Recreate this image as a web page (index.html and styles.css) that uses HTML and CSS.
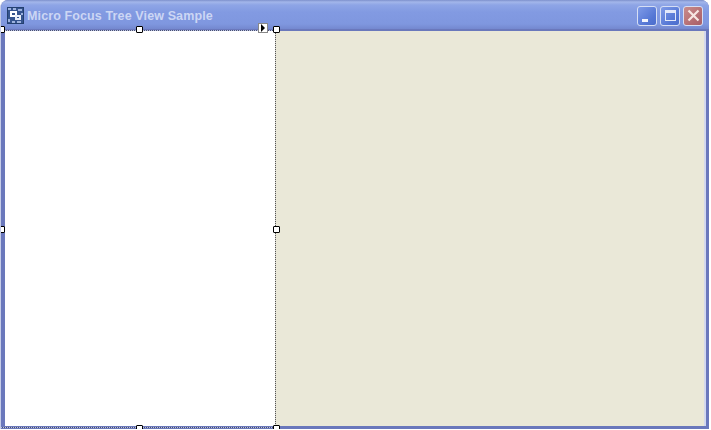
FILE: index.html
```html
<!DOCTYPE html>
<html lang="en">
<head>
  <meta charset="UTF-8">
  <title>Micro Focus Tree View Sample</title>
  <link rel="stylesheet" href="styles.css">
</head>
<body>
  <div class="window">
    <div class="titlebar">
      <svg class="app-icon" width="17" height="17" viewBox="0 0 17 17">
        <rect x="0.5" y="0.5" width="16" height="16" fill="#35548f" stroke="#24406f"/>
        <path d="M1 1h3v2H1zM6 1h3v2H6zM11 2h4v2h-4zM1 12h2v3H1zM5 14h3v2H5zM10 14h4v2h-4zM14 6h2v2h-2z" fill="#9db2de"/>
        <rect x="3" y="4" width="7" height="6" fill="#fff"/>
        <rect x="5" y="6" width="3" height="2" fill="#35548f"/>
        <rect x="8" y="8" width="6" height="5" fill="#e8eef8"/>
        <rect x="10" y="10" width="2" height="1" fill="#35548f"/>
      </svg>
      <span class="title">Micro Focus Tree View Sample</span>
      <div class="controls">
        <div class="ctl ctl-min"><span class="min-bar"></span></div>
        <div class="ctl ctl-max"><span class="max-box"></span></div>
        <div class="ctl ctl-close">
          <svg width="13" height="13" viewBox="0 0 13 13"><path d="M1.5 1.5l10 10M11.5 1.5l-10 10" stroke="#f6e6e2" stroke-width="2.2" fill="none"/></svg>
        </div>
      </div>
    </div>
    <div class="client">
      <div class="tree"></div>
      <div class="splitter"></div>
      <div class="panel"></div>

      <!-- selection handles of the designer -->
      <span class="grip grip-tl"></span>
      <span class="grip grip-tm"></span>
      <span class="grip grip-tr"></span>
      <span class="grip grip-ml"></span>
      <span class="grip grip-mr"></span>
      <span class="grip grip-bm"></span>
      <span class="grip grip-br"></span>
      <span class="smart-tag"></span>
    </div>
  </div>
</body>
</html>
```

FILE: styles.css
```css
html, body {
  margin: 0;
  padding: 0;
  background: #fff;
  overflow: hidden;
}
.window {
  width: 709px;
  height: 429px;
  box-sizing: border-box;
  display: flex;
  flex-direction: column;
  border-left: 1px solid #c5cce8;
  border-radius: 8px 8px 0 0;
  background: #6a78bc;
  overflow: hidden;
}
.titlebar {
  height: 29px;
  flex: none;
  display: flex;
  align-items: center;
  padding: 2px 6px 0 6px;
  box-sizing: border-box;
  background: linear-gradient(to bottom, #7d90cc 0, #a3b6ea 2px, #8ea5e6 5px, #829ae2 12px, #7f97df 24px, #7488cf 29px);
}
.app-icon {
  flex: none;
}
.title {
  margin-left: 3px;
  font: bold 12.5px "Liberation Sans", Arial, sans-serif;
  letter-spacing: 0.12px;
  color: #ccd6f4;
}
.controls {
  margin-left: auto;
  display: flex;
  gap: 3px;
}
.ctl {
  width: 20px;
  height: 20px;
  box-sizing: border-box;
  border: 1px solid #d6def4;
  border-radius: 3px;
  display: flex;
  align-items: center;
  justify-content: center;
  position: relative;
}
.ctl-min, .ctl-max {
  background: linear-gradient(135deg, #7f9be8, #5476d4 70%, #4c6ecc);
}
.ctl-close {
  background: linear-gradient(135deg, #c98c8c, #b26a70 70%, #a85f68);
}
.min-bar {
  position: absolute;
  left: 4px;
  bottom: 3px;
  width: 6px;
  height: 3px;
  background: #f2f5fd;
}
.max-box {
  width: 11px;
  height: 11px;
  box-sizing: border-box;
  border: 1px solid #e3e9fa;
  border-top-width: 3px;
}
.client {
  flex: 1;
  position: relative;
  display: flex;
  margin: 1px 3px 3px 4px;
  padding-top: 1px;
  min-height: 0;
}
/* dotted outline of the selected control, top and bottom */
.client::before,
.client::after {
  content: "";
  position: absolute;
  left: -5px;
  width: 279px;
  height: 1px;
  background: repeating-linear-gradient(to right, #4a5070 0, #4a5070 1px, #b9c2e4 1px, #b9c2e4 2px);
}
.client::before { top: 0; }
.client::after { bottom: -2px; }
.tree {
  width: 270px;
  background: #fff;
}
.splitter {
  width: 1px;
  background: repeating-linear-gradient(to bottom, #555 0, #555 1px, #d8d8d0 1px, #d8d8d0 2px);
}
.panel {
  flex: 1;
  background: #eae8d8;
  border-right: 2px solid #d3d8ee;
}
.grip {
  position: absolute;
  z-index: 1;
  width: 5px;
  height: 5px;
  background: #fff;
  border: 1px solid #000;
  border-radius: 1px;
}
.grip-tl { left: -7px; top: -4px; }
.grip-tm { left: 131px; top: -4px; }
.grip-tr { left: 268px; top: -4px; }
.grip-ml { left: -7px; top: 196px; }
.grip-mr { left: 268px; top: 196px; }
.grip-bm { left: 131px; top: 395px; }
.grip-br { left: 268px; top: 395px; }
.smart-tag {
  position: absolute;
  z-index: 1;
  left: 253px;
  top: -7px;
  width: 8px;
  height: 8px;
  background: #fff;
  border: 1px solid #888;
}
.smart-tag::after {
  content: "";
  position: absolute;
  left: 2px;
  top: 0;
  border-left: 4px solid #000;
  border-top: 4px solid transparent;
  border-bottom: 4px solid transparent;
}
```
